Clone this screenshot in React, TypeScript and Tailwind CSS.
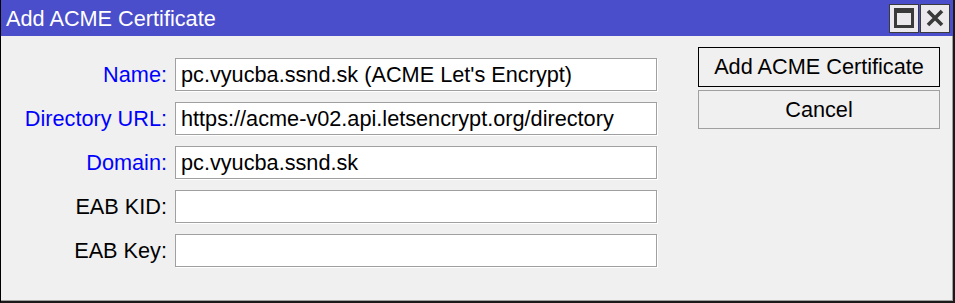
import React from 'react'

type Field = { label: string; value: string; required?: boolean }

const fields: Field[] = [
    { label: 'Name:', value: "pc.vyucba.ssnd.sk (ACME Let's Encrypt)", required: true },
    { label: 'Directory URL:', value: 'https://acme-v02.api.letsencrypt.org/directory', required: true },
    { label: 'Domain:', value: 'pc.vyucba.ssnd.sk', required: true },
    { label: 'EAB KID:', value: '' },
    { label: 'EAB Key:', value: '' },
]

const TitleButton: React.FC<{ children: React.ReactNode }> = ({ children }) => (
    <div className="flex items-center justify-center w-[30px] h-[29px] bg-[#ece9ec] border border-[#3a3a3a]">
        {children}
    </div>
)

export default function App() {
    return (
        <div
            className="w-[955px] h-[303px] flex flex-col bg-[#f0f0f0] border-l border-l-black border-r-2 border-r-[#1a1a1a] border-b-2 border-b-[#1a1a1a] text-[21.7px] leading-none"
            style={{ fontFamily: '"Liberation Sans", Arial, sans-serif' }}
        >
            {/* title bar */}
            <div className="flex items-center justify-between h-[36px] bg-[#4b4ecb] pl-[5px] pr-[3px]">
                <span className="text-white pt-[1px]">Add ACME Certificate</span>
                <div className="flex gap-[1px]">
                    <TitleButton>
                        <svg width="20" height="20" viewBox="0 0 20 20">
                            <rect x="1.5" y="1.5" width="17" height="17" fill="none" stroke="#3a3a3a" strokeWidth="3" />
                            <rect x="1" y="1" width="18" height="4" fill="#3a3a3a" />
                        </svg>
                    </TitleButton>
                    <TitleButton>
                        <svg width="18" height="18" viewBox="0 0 18 18">
                            <path d="M2 2 L16 16 M16 2 L2 16" stroke="#3a3a3a" strokeWidth="3.6" />
                        </svg>
                    </TitleButton>
                </div>
            </div>

            {/* body */}
            <div className="flex flex-1 border-r border-r-[#a0a0a0] border-b border-b-[#a0a0a0]">
                <div className="grid grid-cols-[166px_482px] gap-x-[8px] gap-y-[11px] pt-[22px] content-start">
                    {fields.map(f => (
                        <React.Fragment key={f.label}>
                            <label className={`flex items-center justify-end h-[33px] ${f.required ? 'text-[#0000ff]' : 'text-black'}`}>
                                {f.label}
                            </label>
                            <div className="flex items-center h-[33px] bg-white border border-[#a0a0a0] shadow-[1px_1px_0_#ffffff] px-[5px] text-black whitespace-nowrap overflow-hidden">
                                {f.value}
                            </div>
                        </React.Fragment>
                    ))}
                </div>
                <div className="flex flex-col gap-[3px] ml-[41px] pt-[11px]">
                    <button className="w-[242px] h-[40px] bg-[#f0f0f0] border border-black text-black">
                        Add ACME Certificate
                    </button>
                    <button className="w-[242px] h-[39px] bg-[#f0f0f0] border border-[#a0a0a0] text-black">
                        Cancel
                    </button>
                </div>
            </div>
        </div>
    )
}
